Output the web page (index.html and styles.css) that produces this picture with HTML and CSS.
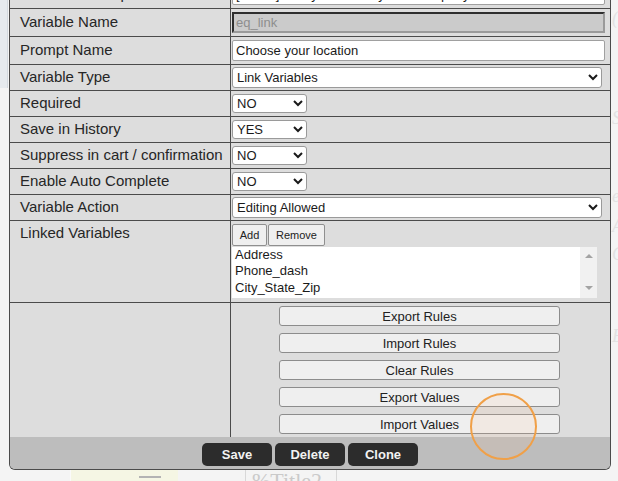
FILE: index.html
```html
<!DOCTYPE html>
<html>
<head>
<meta charset="utf-8">
<title>Variable Editor</title>
<link rel="stylesheet" href="styles.css">
</head>
<body>
<div class="page">
  <div class="page-strip"></div>
  <div class="page-note"><span class="page-dash"></span></div>
  <div class="page-tile">%Title2</div>
  <div class="page-side">
    <span class="s1">(</span>
    <span class="s2">S</span>
    <span class="s3">e</span>
    <span class="s4">A</span>
    <span class="s5">C</span>
    <span class="s6">E</span>
  </div>
</div>

<div class="dialog">
  <div class="row r-text">
    <div class="label">Variable Description</div>
    <div class="value"><input class="field" type="text" value="[Select] Pick your delivery location query"></div>
  </div>
  <div class="row r-text">
    <div class="label">Variable Name</div>
    <div class="value"><input class="field disabled" type="text" value="eq_link" disabled></div>
  </div>
  <div class="row r-text">
    <div class="label">Prompt Name</div>
    <div class="value"><input class="field" type="text" value="Choose your location"></div>
  </div>
  <div class="row r-sel">
    <div class="label">Variable Type</div>
    <div class="value"><select class="sel sel-wide"><option>Link Variables</option></select></div>
  </div>
  <div class="row r-sel">
    <div class="label">Required</div>
    <div class="value"><select class="sel sel-small"><option>NO</option><option>YES</option></select></div>
  </div>
  <div class="row r-sel">
    <div class="label">Save in History</div>
    <div class="value"><select class="sel sel-small"><option>YES</option><option>NO</option></select></div>
  </div>
  <div class="row r-sel">
    <div class="label">Suppress in cart / confirmation</div>
    <div class="value"><select class="sel sel-small"><option>NO</option><option>YES</option></select></div>
  </div>
  <div class="row r-sel">
    <div class="label">Enable Auto Complete</div>
    <div class="value"><select class="sel sel-small"><option>NO</option><option>YES</option></select></div>
  </div>
  <div class="row r-sel">
    <div class="label">Variable Action</div>
    <div class="value"><select class="sel sel-wide"><option>Editing Allowed</option></select></div>
  </div>
  <div class="row r-linked">
    <div class="label label-top">Linked Variables</div>
    <div class="value value-stack">
      <div class="mini-bar">
        <button class="mini-btn btn-add">Add</button>
        <button class="mini-btn btn-remove">Remove</button>
      </div>
      <div class="listbox">
        <ul class="list-items">
          <li>Address</li>
          <li>Phone_dash</li>
          <li>City_State_Zip</li>
        </ul>
        <div class="list-scroll">
          <span class="arrow-up"></span>
          <span class="arrow-down"></span>
        </div>
      </div>
    </div>
  </div>
  <div class="row r-tools">
    <div class="label"></div>
    <div class="value tools">
      <button class="tool-btn">Export Rules</button>
      <button class="tool-btn">Import Rules</button>
      <button class="tool-btn">Clear Rules</button>
      <button class="tool-btn">Export Values</button>
      <button class="tool-btn">Import Values</button>
    </div>
  </div>
  <div class="footer">
    <button class="act-btn">Save</button>
    <button class="act-btn">Delete</button>
    <button class="act-btn">Clone</button>
  </div>
</div>

<div class="click-ring"></div>
</body>
</html>
```

FILE: styles.css
```css
* { box-sizing: border-box; }

html, body {
  margin: 0;
  height: 100%;
}

body {
  position: relative;
  overflow: hidden;
  background: #f4f4f4;
  font-family: "Liberation Sans", Arial, sans-serif;
  color: #222;
}

/* underlying page, partly hidden by the dialog */
.page-strip {
  position: absolute;
  left: 0;
  top: 0;
  width: 8px;
  height: 88px;
  background: #e6eaee;
  border-right: 1px solid #d3d9df;
}

.page-note {
  position: absolute;
  left: 70px;
  top: 455px;
  width: 108px;
  height: 40px;
  background: #f5f6e4;
  border-left: 1px solid #fafafa;
}

.page-dash {
  position: absolute;
  left: 68px;
  top: 21px;
  width: 22px;
  height: 2px;
  background: #b3b3b3;
}

.page-tile {
  position: absolute;
  left: 245px;
  top: 467px;
  width: 92px;
  height: 30px;
  padding-left: 6px;
  border: 1px solid #d8d8d8;
  font-family: "Liberation Serif", "Times New Roman", serif;
  font-size: 22px;
  line-height: 26px;
  color: #cacaca;
}

.page-side span {
  position: absolute;
  left: 612px;
  font-family: "Liberation Serif", serif;
  font-style: italic;
  font-size: 18px;
  color: #e2e2e2;
}
.page-side .s1 { top: 8px; }
.page-side .s2 { top: 108px; }
.page-side .s3 { top: 186px; }
.page-side .s4 { top: 216px; }
.page-side .s5 { top: 244px; }
.page-side .s6 { top: 326px; }

/* dialog (modal over the page) */
.dialog {
  position: absolute;
  left: 9px;
  top: -19px;
  width: 602px;
  background: #dddddd;
  border: 1px solid #4b4b4b;
  border-top: none;
  border-radius: 0 0 6px 6px;
  overflow: hidden;
}

.row {
  display: grid;
  grid-template-columns: 221px 1fr;
  border-bottom: 1px solid #4b4b4b;
}

.r-text { height: 28px; }
.r-sel { height: 26px; }
.r-linked { height: 82px; }
.r-tools { height: 134px; border-bottom: none; }

.label {
  display: flex;
  align-items: center;
  padding: 0 0 2px 10px;
  border-right: 1px solid #4b4b4b;
  font-size: 15px;
  color: #262626;
  white-space: nowrap;
}

.label-top {
  align-items: flex-start;
  padding-top: 3px;
}

.value {
  display: flex;
  align-items: center;
  padding-left: 1px;
}

.field {
  width: 373px;
  height: 21px;
  margin: 0;
  padding: 0 3px;
  border: 1px solid #a0a0a0;
  border-radius: 2px;
  background: #fff;
  font-family: "Liberation Sans", Arial, sans-serif;
  font-size: 13px;
  color: #1a1a1a;
}

.field.disabled {
  border: 2px solid;
  border-color: #2e2e2e #9a9a9a #9a9a9a #2e2e2e;
  border-radius: 0;
  background: #cbcbcb;
  color: #8e8e8e;
  padding-left: 2px;
}

.sel {
  margin: 0;
  font-family: "Liberation Sans", Arial, sans-serif;
  font-size: 13px;
  color: #1a1a1a;
  background: #fff;
  border: 1px solid #9a9a9a;
  border-radius: 3px;
}

.sel-wide { width: 370px; height: 21px; }
.sel-small { width: 75px; height: 19px; }

/* linked variables */
.value-stack {
  flex-direction: column;
  align-items: flex-start;
  padding-top: 3px;
}

.mini-bar {
  display: flex;
  gap: 1px;
}

.mini-btn {
  height: 22px;
  margin: 0;
  padding: 0;
  border: 1px solid #8f8f8f;
  border-radius: 2px;
  background: #efefef;
  font-family: "Liberation Sans", Arial, sans-serif;
  font-size: 11px;
  color: #222;
}
.btn-add { width: 35px; }
.btn-remove { width: 57px; }

.listbox {
  display: flex;
  width: 365px;
  height: 51px;
  margin-top: 1px;
  background: #fff;
}

.list-items {
  flex: 1;
  margin: 0;
  padding: 0 0 0 3px;
  list-style: none;
  font-size: 13px;
  line-height: 16.3px;
  color: #1a1a1a;
}

.list-scroll {
  position: relative;
  width: 17px;
  background: #f1f1f1;
}

.arrow-up,
.arrow-down {
  position: absolute;
  left: 5px;
  width: 0;
  height: 0;
  border-left: 4px solid transparent;
  border-right: 4px solid transparent;
}
.arrow-up { top: 7px; border-bottom: 4px solid #a3a3a3; }
.arrow-down { bottom: 8px; border-top: 4px solid #a3a3a3; }

/* rule tools */
.tools {
  flex-direction: column;
  align-items: center;
  justify-content: flex-start;
  gap: 7px;
  padding: 3px 2px 0 0;
}

.tool-btn {
  width: 281px;
  height: 20px;
  margin: 0;
  padding: 0;
  border: 1px solid #8c8c8c;
  border-radius: 3px;
  background: #efefef;
  font-family: "Liberation Sans", Arial, sans-serif;
  font-size: 13px;
  color: #222;
}

/* footer actions */
.footer {
  display: flex;
  justify-content: center;
  align-items: flex-start;
  gap: 3px;
  height: 32px;
  padding-top: 6px;
  background: #bdbdbd;
}

.act-btn {
  width: 70px;
  height: 23px;
  margin: 0;
  padding: 0;
  border: none;
  border-radius: 5px;
  background: #2c2c2c;
  font-family: "Liberation Sans", Arial, sans-serif;
  font-weight: bold;
  font-size: 13px;
  color: #f2f2f2;
}

/* click indicator overlay */
.click-ring {
  position: absolute;
  left: 470px;
  top: 393px;
  width: 67px;
  height: 67px;
  border: 2px solid #f0a048;
  border-radius: 50%;
  background: rgba(255, 190, 140, 0.12);
}
```
